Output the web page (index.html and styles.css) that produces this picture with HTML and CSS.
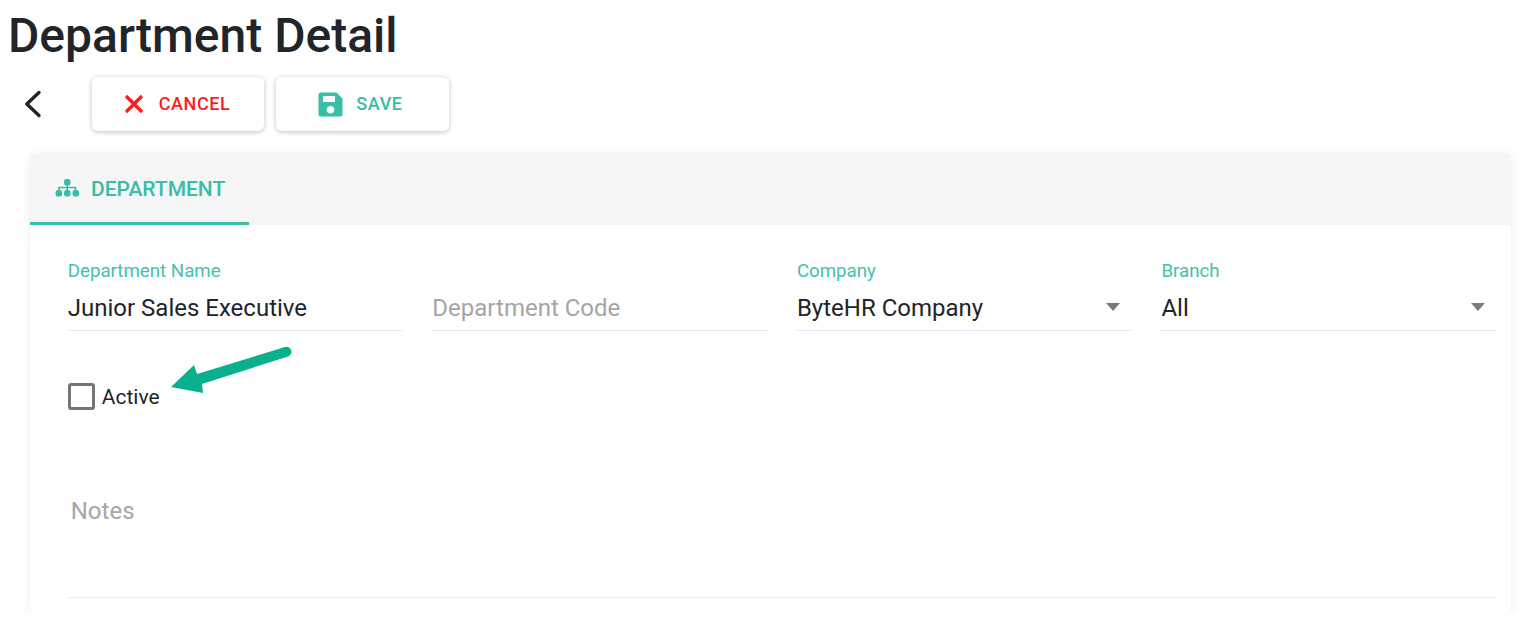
FILE: index.html
```html
<!DOCTYPE html>
<html lang="en">
<head>
  <meta charset="UTF-8" />
  <title>Department Detail</title>
  <link rel="stylesheet" href="styles.css">
</head>
<body>
  <h1>Department Detail</h1>

  <div class="toolbar">
    <a class="back" href="#">
      <svg width="18" height="28" viewBox="0 0 18 28"><path d="M15 2.500 2.800 14 15 25.500" fill="none" stroke="#212529" stroke-width="3.400" stroke-linecap="round" stroke-linejoin="round"/></svg>
    </a>
    <button class="btn btn-cancel">
      <svg width="20" height="20" viewBox="0 0 20 20"><path d="M2 2 18 18M18 2 2 18" fill="none" stroke="#fb1d1d" stroke-width="3.400"/></svg>
      <span class="btn-text">CANCEL</span>
    </button>
    <button class="btn btn-save">
      <svg width="25" height="25" viewBox="0 0 25 25"><path fill-rule="evenodd" d="M3 .5h15.500L24.500 6.500V22a2.500 2.500 0 0 1-2.500 2.500H3A2.500 2.500 0 0 1 .5 22V3A2.500 2.500 0 0 1 3 .5ZM5 4v6h12V4H5Zm7.500 10a3.800 3.800 0 1 0 0 7.600 3.800 3.800 0 0 0 0-7.600Z" fill="#38bda7"/></svg>
      <span class="btn-text">SAVE</span>
    </button>
  </div>

  <div class="card">
    <div class="tabs">
      <div class="tab">
        <svg width="24" height="20" viewBox="0 0 24 20"><g fill="#38bda7"><rect x="9" y="1" width="6.500" height="6.500" rx="2.500"/><rect x="0.500" y="12" width="6.500" height="6.500" rx="2.500"/><rect x="9" y="12" width="6.500" height="6.500" rx="2.500"/><rect x="17.500" y="12" width="6.500" height="6.500" rx="2.500"/></g><path d="M12.250 6v7M4 13V9.500h16.500V13" fill="none" stroke="#38bda7" stroke-width="1.600"/></svg>
        <span class="tab-text">DEPARTMENT</span>
      </div>
    </div>

    <div class="card-body">
      <div class="field-row">
        <div class="field">
          <label>Department Name</label>
          <div class="value">Junior Sales Executive</div>
        </div>
        <div class="field">
          <label>&nbsp;</label>
          <div class="value placeholder">Department Code</div>
        </div>
        <div class="field">
          <label>Company</label>
          <div class="value select">ByteHR Company</div>
        </div>
        <div class="field">
          <label>Branch</label>
          <div class="value select">All</div>
        </div>
      </div>

      <div class="check-row">
        <span class="checkbox"></span>
        <span>Active</span>
        <svg class="arrow" width="124" height="52" viewBox="0 0 124 52"><path d="M1 42 24 20l3 9 88-27a4.500 4.500 0 0 1 3 9.500L32 39l1 9z" fill="#08b08e"/></svg>
      </div>

      <div class="notes">Notes</div>
    </div>
  </div>
</body>
</html>
```

FILE: styles.css
```css
body {
  font-family: Roboto, sans-serif;
  background: #fff;
  margin: 0;
  color: #212529;
}
h1 {
  font-size: 48px;
  font-weight: 500;
  line-height: 54px;
  margin: 9px 0 0 8px;
}
.toolbar {
  display: flex;
  align-items: center;
  gap: 12px;
  margin: 14px 0 0 24px;
}
.back {
  display: flex;
  width: 56px;
}
.btn {
  display: flex;
  align-items: center;
  justify-content: center;
  height: 54px;
  width: 172px;
  font-family: inherit;
  font-size: 18px;
  font-weight: 500;
  letter-spacing: 0.6px;
  background: white;
  border: 0;
  border-radius: 6px;
  box-shadow: 0 1px 5px rgba(0,0,0,0.25);
}
.btn-text {
  margin-bottom: 2px;
}
.btn-cancel {
  gap: 15px;
  padding-right: 8px;
  color: #fb1d1d;
}
.btn-save {
  width: 173px;
  gap: 13px;
  padding-right: 10px;
  color: #38bda7;
}
.card {
  margin: 22px 25px 0 30px;
  border-radius: 6px;
  background: white;
  box-shadow: 0 2px 12px rgba(40,50,90,0.08);
}
.tabs {
  height: 72px;
  background: #f6f6f6;
}
.tab {
  display: flex;
  align-items: center;
  gap: 12px;
  box-sizing: border-box;
  width: 219px;
  height: 72px;
  padding-left: 25px;
  color: #38bda7;
  font-size: 21px;
  font-weight: 500;
  border-bottom: 3px solid #38bda7;
}
.tab-text {
  margin-top: 2px;
}
.card-body {
  padding: 34px 15px 15px 37.750px;
}
.field-row {
  display: grid;
  grid-template-columns: repeat(4, 1fr);
  gap: 30px;
}
.field label {
  display: block;
  font-size: 18.700px;
  line-height: 24px;
  color: #45c1ac;
}
.value {
  position: relative;
  height: 48px;
  box-sizing: border-box;
  padding-top: 10px;
  font-size: 24px;
  line-height: 30px;
  color: #212529;
  border-bottom: 1px solid #e6e8ef;
}
.placeholder {
  color: #a5a5a5;
}
.select::after {
  content: '';
  position: absolute;
  right: 11px;
  top: 20px;
  border-top: 8px solid #7a7a7a;
  border-left: 7px solid transparent;
  border-right: 7px solid transparent;
}
.check-row {
  position: relative;
  display: flex;
  align-items: flex-start;
  gap: 7px;
  margin-top: 52px;
  font-size: 21px;
  line-height: 28px;
}
.checkbox {
  box-sizing: border-box;
  width: 27px;
  height: 27px;
  border: 3px solid #757575;
  border-radius: 3px;
}
.arrow {
  position: absolute;
  left: 102px;
  top: -38px;
}
.notes {
  height: 116px;
  margin-top: 71px;
  padding: 14px 3px 0;
  box-sizing: border-box;
  font-size: 24px;
  line-height: 30px;
  color: #a9a5a5;
  border-bottom: 1px solid #ececec;
}
```
